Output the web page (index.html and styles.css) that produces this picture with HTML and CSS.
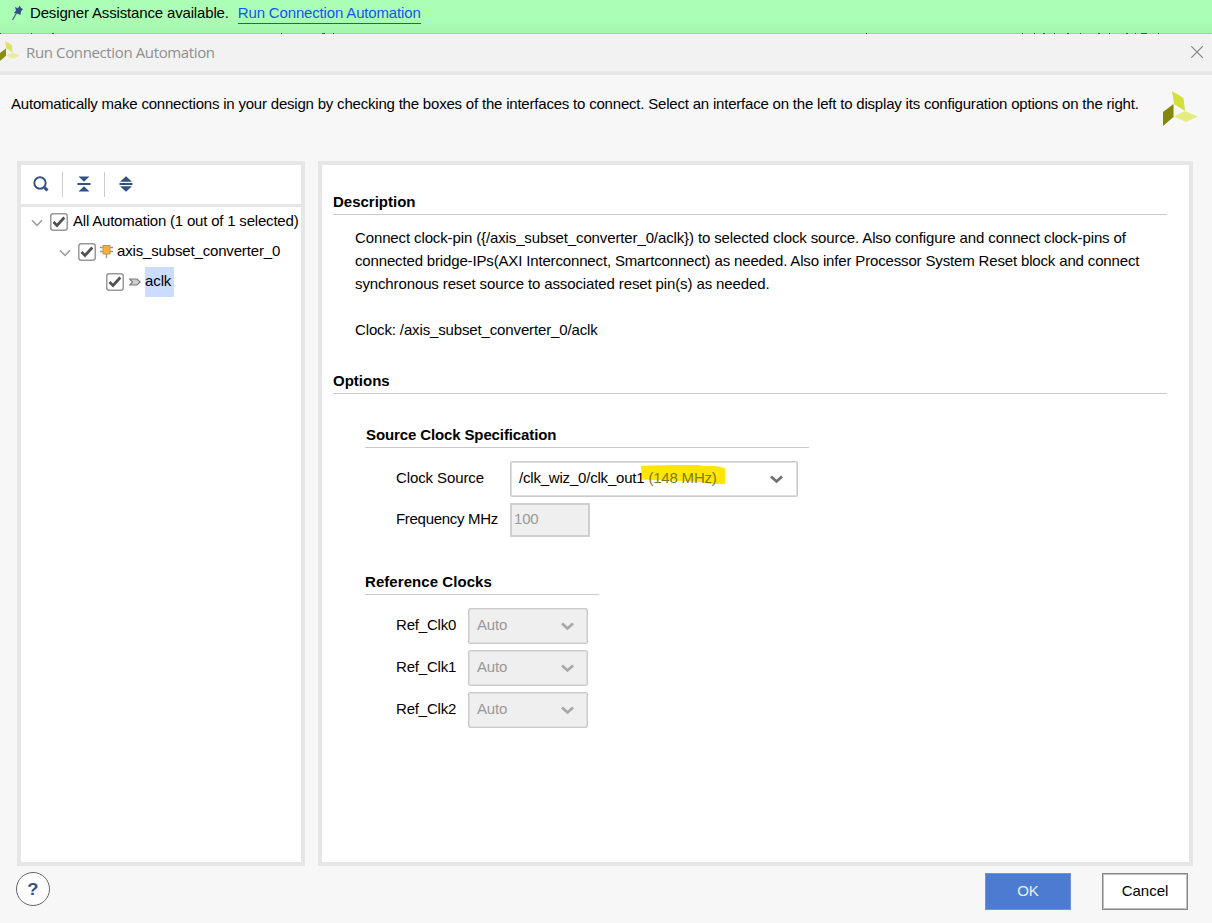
FILE: index.html
```
<!DOCTYPE html>
<html lang="en">
<head>
<meta charset="utf-8">
<title>Run Connection Automation</title>
<link rel="stylesheet" href="styles.css">
</head>
<body>
<div class="banner">
  <svg class="pin" width="14" height="18" viewBox="0 0 14 18"><path d="M5 3L8 4.200L9.500 1.500L11 4L13 5L11 7.500L10.500 11L7.500 9.800L4 9L6 6.500Z" fill="#315184"/><path d="M6.500 9L2.500 16" stroke="#47678c" stroke-width="1.300"/></svg>
  <span class="banner-text">Designer Assistance available.</span>
  <a class="banner-link">Run Connection Automation</a>
  <svg class="edge-marks" width="1212" height="1" viewBox="0 0 1212 1"><path d="M0 .5h1M31 .5h1M52 .5h2M281 .5h1M322 .5h3M333 .5h1M866 .5h1M1022 .5h1M1034 .5h1M1043 .5h2M1054 .5h1M1067 .5h2M1080 .5h1M1098 .5h2M1109 .5h1M1126 .5h2M1135 .5h1M1141 .5h6M1158 .5h1" stroke="#335c3d"/></svg>
</div>
<div class="titlebar">
  <svg class="title-logo" width="20" height="20" viewBox="0 0 35 35"><path d="M9 0L20.500 7L22 20L11 13Z" fill="#dde263"/><path d="M0 21L10.500 13V26L0 35Z" fill="#8b8c14"/><path d="M11 25.500L22 20L35 25.500L23 31Z" fill="#e8ec9c"/></svg>
  <span class="title">Run Connection Automation</span>
  <svg class="close" width="12" height="12" viewBox="0 0 12 12"><path d="M.3.300L11.700 11.700M11.700.300L.3 11.700" stroke="#808080" stroke-width="1.150"/></svg>
</div>
<div class="intro">
  <p class="intro-text">Automatically make connections in your design by checking the boxes of the interfaces to connect. Select an interface on the left to display its configuration options on the right.</p>
  <svg class="logo" width="35" height="35" viewBox="0 0 35 35"><path d="M9 0L20.500 7L22 20L11 13Z" fill="#d4df3b"/><path d="M0 21L10.500 13V26L0 35Z" fill="#858707"/><path d="M11 25.500L22 20L35 25.500L23 31Z" fill="#e4ec80"/></svg>
</div>
<main class="panels">
  <section class="panel tree-panel">
    <div class="toolbar">
      <svg class="tool" width="16" height="16" viewBox="0 0 16 16"><circle cx="7" cy="7" r="5.700" fill="none" stroke="#315184" stroke-width="1.900"/><path d="M11.500 11.500L14.500 14.500" stroke="#315184" stroke-width="3"/></svg>
      <i class="tool-sep"></i>
      <svg class="tool" width="14" height="16" viewBox="0 0 14 16"><path d="M1.500 .5h11L7 5.800ZM1.500 15.500h11L7 10.200ZM.500 7h13v2H.500Z" fill="#315184"/></svg>
      <i class="tool-sep"></i>
      <svg class="tool" width="14" height="16" viewBox="0 0 14 16"><path d="M1 5.800L7 .2L13 5.800ZM1 10.200L7 15.800L13 10.200ZM.500 7h13v2H.500Z" fill="#315184"/></svg>
    </div>
    <div class="tree">
      <div class="row row-root">
        <svg class="twisty" width="12" height="8" viewBox="0 0 12 8"><path d="M1 1.200L6 6.500L11 1.200" fill="none" stroke="#9a9a9a" stroke-width="1.500"/></svg>
        <svg class="check" width="18" height="18" viewBox="0 0 18 18"><rect x=".75" y=".75" width="16.500" height="16.500" rx="2.500" fill="#fff" stroke="#999" stroke-width="1.500"/><path d="M3.500 9L7 12.500L14.300 4.500" fill="none" stroke="#505050" stroke-width="2.700"/></svg>
        <span class="label root-label">All Automation (1 out of 1 selected)</span>
      </div>
      <div class="row row-cell">
        <svg class="twisty" width="12" height="8" viewBox="0 0 12 8"><path d="M1 1.200L6 6.500L11 1.200" fill="none" stroke="#9a9a9a" stroke-width="1.500"/></svg>
        <svg class="check" width="18" height="18" viewBox="0 0 18 18"><rect x=".75" y=".75" width="16.500" height="16.500" rx="2.500" fill="#fff" stroke="#999" stroke-width="1.500"/><path d="M3.500 9L7 12.500L14.300 4.500" fill="none" stroke="#505050" stroke-width="2.700"/></svg>
        <svg class="cell-icon" width="13" height="13" viewBox="0 0 13 13"><path d="M0 2.500h13M0 6.500h13M6.500 9v4" stroke="#929292" stroke-width="1.300"/><rect x="3" y=".5" width="7" height="8.500" fill="#fbb034" stroke="#b39a68"/></svg>
        <span class="label cell-label">axis_subset_converter_0</span>
      </div>
      <div class="row row-pin">
        <svg class="check" width="18" height="18" viewBox="0 0 18 18"><rect x=".75" y=".75" width="16.500" height="16.500" rx="2.500" fill="#fff" stroke="#999" stroke-width="1.500"/><path d="M3.500 9L7 12.500L14.300 4.500" fill="none" stroke="#505050" stroke-width="2.700"/></svg>
        <svg class="pin-icon" width="12" height="8" viewBox="0 0 12 8"><path d="M.7 1H8L11.300 4L8 7H.7L3.500 4Z" fill="#d0d0d0" stroke="#777" stroke-width="1.100"/></svg>
        <span class="label selected">aclk</span>
      </div>
    </div>
  </section>
  <section class="panel detail-panel">
    <h2 class="heading">Description</h2>
    <div class="description">
      <p class="d1">Connect clock-pin ({/axis_subset_converter_0/aclk}) to selected clock source. Also configure and connect clock-pins of</p>
      <p class="d2">connected bridge-IPs(AXI Interconnect, Smartconnect) as needed. Also infer Processor System Reset block and connect</p>
      <p class="d3">synchronous reset source to associated reset pin(s) as needed.</p>
      <p class="clock-line">Clock: /axis_subset_converter_0/aclk</p>
    </div>
    <h2 class="heading options-heading">Options</h2>
    <div class="group source-group">
      <h3 class="heading source-heading">Source Clock Specification</h3>
      <div class="field source-field">
        <span class="field-label">Clock Source</span>
        <div class="select source-select">
          <svg class="marker" width="85" height="21" viewBox="0 0 85 21"><path d="M0 2L8 1.500L34 1H58L61 2H73L80 3L84 4.500V20L69 20L60 18L42 17L1 15.500Z" fill="#ffe600"/></svg>
          <span class="value">/clk_wiz_0/clk_out1 <span class="mhz">(148 MHz)</span></span>
          <svg class="arrow" width="13" height="9" viewBox="0 0 13 9"><path d="M1 1.500L6.500 6.500L12 1.500" fill="none" stroke="#707070" stroke-width="2.700"/></svg>
        </div>
      </div>
      <div class="field freq-field">
        <span class="field-label freq-label">Frequency MHz</span>
        <div class="input">100</div>
      </div>
    </div>
    <div class="group ref-group">
      <h3 class="heading">Reference Clocks</h3>
      <div class="field ref-field">
        <span class="field-label">Ref_Clk0</span>
        <div class="select disabled"><span class="value">Auto</span><svg class="arrow" width="13" height="9" viewBox="0 0 13 9"><path d="M1 1.500L6.500 6.500L12 1.500" fill="none" stroke="#a8a8a8" stroke-width="2.700"/></svg></div>
      </div>
      <div class="field ref-field">
        <span class="field-label">Ref_Clk1</span>
        <div class="select disabled"><span class="value">Auto</span><svg class="arrow" width="13" height="9" viewBox="0 0 13 9"><path d="M1 1.500L6.500 6.500L12 1.500" fill="none" stroke="#a8a8a8" stroke-width="2.700"/></svg></div>
      </div>
      <div class="field ref-field">
        <span class="field-label">Ref_Clk2</span>
        <div class="select disabled"><span class="value">Auto</span><svg class="arrow" width="13" height="9" viewBox="0 0 13 9"><path d="M1 1.500L6.500 6.500L12 1.500" fill="none" stroke="#a8a8a8" stroke-width="2.700"/></svg></div>
      </div>
    </div>
  </section>
</main>
<footer class="footer">
  <div class="help"><span class="help-mark">?</span></div>
  <div class="button ok">OK</div>
  <div class="button cancel">Cancel</div>
</footer>
</body>
</html>
```
FILE: styles.css
```
* { box-sizing: border-box; }
html, body { margin: 0; height: 923px; overflow: hidden; }
body {
  display: flex; flex-direction: column;
  background: #f7f7f7; color: #000;
  font: 15px/23px "Liberation Sans", Arial, sans-serif;
  white-space: nowrap;
}
svg { display: block; flex: none; }
p, h2, h3 { margin: 0; }

.banner {
  position: relative; flex: none; height: 34px;
  display: flex; align-items: flex-start;
  padding: 4px 0 0 10px;
  background: linear-gradient(#abffb4 20px, #a4f5ad 33px);
  border-bottom: 1px solid #b4c4b6;
}
.banner-text { margin: -3px 0 0 6px; letter-spacing: -.155px; }
.banner-link { margin: -3px 0 0 9px; color: #1454f0; border-bottom: 1px solid #1454f0; height: 23px; letter-spacing: -.16px; }
.edge-marks { position: absolute; left: 0; bottom: -1px; }

.titlebar {
  flex: none; height: 41px; display: flex; align-items: center;
  padding-right: 9px;
  background: #f2f2f2; border-bottom: 4px solid #e6e6e6;
  border-top-right-radius: 6px;
}
.title { margin: -2px 0 0 6px; flex: 1; color: #8f8f8f; font: 15px/20px "Open Sans", sans-serif; letter-spacing: -.37px; }
.title-logo { margin-top: -4px; }
.close { margin-top: -2px; }

.intro { flex: none; height: 86px; display: flex; align-items: flex-start; padding: 16px 14px 0 11px; justify-content: space-between; }
.intro-text { margin-top: 1px; letter-spacing: -.202px; }

.panels { flex: none; height: 705px; display: flex; gap: 13px; padding: 0 19px 0 17px; }
.panel { border: 4px solid #e6e6e6; background: #fff; }
.tree-panel { width: 288px; flex: none; }
.detail-panel { width: 875px; flex: none; padding: 25px 22px 0 11px; }

.toolbar { height: 42px; display: flex; align-items: center; padding-left: 12px; border-bottom: 3px solid #e6e6e6; }
.tool-sep { width: 1px; height: 25px; margin: 0 14px 0 13px; background: #ccc; }
.tool { margin-top: -1px; }
.tree { margin-top: -1px; }
.row { display: flex; align-items: center; height: 30px; }
.row-root { padding-left: 10px; }
.row-cell { padding-left: 38px; }
.row-pin { padding-left: 85px; }
.twisty { margin-top: 3px; margin-right: 7px; }
.check { margin-top: 1px; }
.label { line-height: 30px; height: 30px; letter-spacing: -.16px; }
.root-label { margin-left: 5px; letter-spacing: -.2px; }
.cell-icon { margin-left: 4px; }
.cell-label { margin-left: 4px; }
.pin-icon { margin: 1px 0 0 5px; }
.selected { margin: 2px 0 0 4px; padding-right: 3px; line-height: 28px; background: #cadcff; letter-spacing: -.1px; }

.heading { font-size: 15px; font-weight: bold; line-height: 23px; height: 25px; border-bottom: 1px solid #c8c8c8; }
.description { padding: 11px 0 0 22px; }
.d1 { letter-spacing: -.124px; }
.d2 { letter-spacing: -.155px; }
.d3 { letter-spacing: -.12px; }
.clock-line { margin-top: 23px; letter-spacing: -.14px; }
.options-heading { margin-top: 28px; }
.group { margin-left: 32px; }
.source-group { width: 444px; margin-top: 29px; }
.source-heading { padding-left: 1px; letter-spacing: -.12px; }
.ref-group { width: 234px; margin-top: 33px; }
.field { display: flex; align-items: center; padding-left: 31px; }
.source-field { height: 36px; margin-top: 13px; }
.freq-field { height: 34px; margin-top: 6px; }
.field-label { width: 114px; margin-top: -3px; letter-spacing: -.1px; }
.freq-label { letter-spacing: -.3px; }
.select { position: relative; display: flex; align-items: center; justify-content: space-between; width: 120px; height: 36px; padding: 0 14px 0 8px; border: 1px solid #cbcbcb; box-shadow: inset 0 0 0 1px #dedede; border-radius: 2px; background: #fff; }
.source-select { width: 288px; }
.marker { position: absolute; left: 130px; top: 2px; }
.value { position: relative; margin-top: -3px; letter-spacing: -.2px; }
.mhz { color: #827722; }
.arrow { margin-top: 1px; }
.source-select .arrow { margin-right: 0; }
.input { width: 80px; height: 34px; padding-left: 2px; line-height: 28px; border: 2px solid #cfcfcf; background: #efefef; color: #999; letter-spacing: -.2px; }
.ref-field { height: 36px; margin-bottom: 6px; }
.ref-group .heading { margin-bottom: 13px; letter-spacing: .06px; }
.ref-field .field-label { width: 72px; letter-spacing: -.2px; }
.disabled { background: #efefef; color: #999; }
.disabled .arrow { margin-right: -1px; }

.footer { flex: 1; display: flex; align-items: flex-start; padding: 6px 24px 0 16px; }
.help { width: 34px; height: 34px; margin-right: auto; border: 1px solid #666; border-radius: 50%; background: #fff; color: #315184; font-weight: bold; font-size: 16px; line-height: 33px; text-align: center; }
.help-mark { display: inline-block; transform: scaleX(1.15); }
.button { width: 86px; height: 37px; margin-top: 1px; text-align: center; line-height: 33px; border: 1px solid #6e93da; }
.ok { background: #4d7bd1; color: #e8effb; }
.cancel { margin-left: 31px; border: 1px solid #868686; box-shadow: inset 0 0 0 1px #c0c0c0; background: #fff; line-height: 33px; }
```
